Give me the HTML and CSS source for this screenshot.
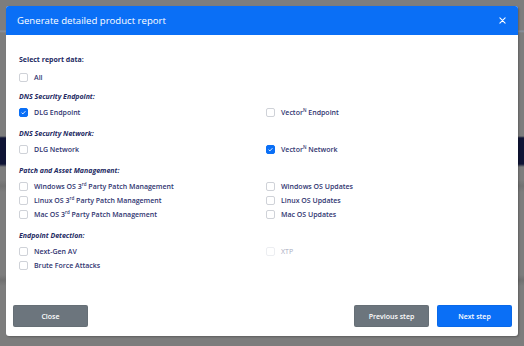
FILE: index.html
```html
<!DOCTYPE html>
<html>
<head>
  <title>Generate detailed product report</title>
  <link rel="stylesheet" href="styles.css">
</head>
<body>
  <div class="modal">
    <div class="modal-header">
      <span class="modal-title">Generate detailed product report</span>
      <button class="close-x" aria-label="Close">
        <svg viewBox="0 0 8 8" width="7" height="7">
          <path d="M1 1L7 7M7 1L1 7" stroke="#fff" stroke-width="1.2" stroke-linecap="round"/>
        </svg>
      </button>
    </div>

    <div class="modal-body">
      <div class="group first">
        <div class="group-title plain">Select report data:</div>
        <div class="rows">
          <label class="check"><span class="box"></span><span>All</span></label>
        </div>
      </div>

      <div class="group">
        <div class="group-title">DNS Security Endpoint:</div>
        <div class="rows">
          <label class="check"><span class="box checked"></span><span>DLG Endpoint</span></label>
          <label class="check"><span class="box"></span><span>Vector<sup>N</sup> Endpoint</span></label>
        </div>
      </div>

      <div class="group">
        <div class="group-title">DNS Security Network:</div>
        <div class="rows">
          <label class="check"><span class="box"></span><span>DLG Network</span></label>
          <label class="check"><span class="box checked"></span><span>Vector<sup>N</sup> Network</span></label>
        </div>
      </div>

      <div class="group">
        <div class="group-title">Patch and Asset Management:</div>
        <div class="rows">
          <label class="check"><span class="box"></span><span>Windows OS 3<sup>rd</sup> Party Patch Management</span></label>
          <label class="check"><span class="box"></span><span>Windows OS Updates</span></label>
          <label class="check"><span class="box"></span><span>Linux OS 3<sup>rd</sup> Party Patch Management</span></label>
          <label class="check"><span class="box"></span><span>Linux OS Updates</span></label>
          <label class="check"><span class="box"></span><span>Mac OS 3<sup>rd</sup> Party Patch Management</span></label>
          <label class="check"><span class="box"></span><span>Mac OS Updates</span></label>
        </div>
      </div>

      <div class="group">
        <div class="group-title">Endpoint Detection:</div>
        <div class="rows">
          <label class="check"><span class="box"></span><span>Next-Gen AV</span></label>
          <label class="check disabled"><span class="box"></span><span>XTP</span></label>
          <label class="check"><span class="box"></span><span>Brute Force Attacks</span></label>
        </div>
      </div>
    </div>

    <div class="modal-footer">
      <button class="btn btn-gray">Close</button>
      <div class="footer-right">
        <button class="btn btn-gray">Previous step</button>
        <button class="btn btn-blue">Next step</button>
      </div>
    </div>
  </div>
</body>
</html>
```

FILE: styles.css
```css
html, body {
  height: 100%;
}
body {
  margin: 0;
  padding: 6px;
  box-sizing: border-box;
  font-family: "Open Sans", "Noto Sans", Arial, sans-serif;
  background:
    linear-gradient(to bottom,
      #7d7d7d 0, #7d7d7d 30px, #8a93a3 31px, #7d7d7d 33px,
      #7d7d7d 136px, #0f1435 138px, #0f1435 164px, #7d7d7d 167px,
      #7d7d7d 180px, #727272 186px, #7d7d7d 192px,
      #7d7d7d 275px, #707070 280px, #7d7d7d 286px, #7d7d7d 100%);
}

.modal {
  width: 512px;
  height: 330px;
  background: #fff;
  border-radius: 3px;
  overflow: hidden;
  display: flex;
  flex-direction: column;
  box-shadow: 1px 1px 2px rgba(0, 0, 0, 0.25);
}

.modal-header {
  height: 29px;
  flex: none;
  background: #0a6ff6;
  display: flex;
  align-items: center;
  padding: 0 11px 0 11px;
}
.modal-title {
  flex: 1;
  color: #fff;
  font-size: 9.6px;
  font-weight: 500;
}
.close-x {
  background: none;
  border: none;
  padding: 0;
  width: 10px;
  height: 10px;
  display: flex;
  align-items: center;
  justify-content: center;
  cursor: pointer;
}

.modal-body {
  flex: 1;
  padding: 18px 13px 0 13px;
}
.group {
  margin-top: 8px;
}
.group.first {
  margin-top: 0;
  margin-bottom: -2px;
}
.group-title {
  height: 14px;
  line-height: 14px;
  margin-bottom: 1px;
  font-size: 7px;
  font-weight: 700;
  font-style: italic;
  color: #232a62;
}
.group-title.plain {
  font-style: normal;
  margin-bottom: 3px;
}
.rows {
  display: grid;
  grid-template-columns: 247px 1fr;
}
.group.first .rows {
  grid-template-columns: 1fr;
}

.check {
  height: 14px;
  display: flex;
  align-items: center;
  font-size: 7px;
  font-weight: 600;
  color: #2f3470;
  white-space: nowrap;
}
.check sup {
  font-size: 4.5px;
  line-height: 0;
  vertical-align: 3px;
}
.box {
  width: 9px;
  height: 9px;
  box-sizing: border-box;
  border: 1px solid #cfd2d8;
  border-radius: 2px;
  margin-right: 6px;
  flex: none;
  background: #fff;
}
.box.checked {
  border-color: #0a6ff6;
  background: #0a6ff6 url("data:image/svg+xml,%3Csvg xmlns='http://www.w3.org/2000/svg' viewBox='0 0 9 9'%3E%3Cpath d='M2.6 4.7L3.9 5.9L6.4 3.2' fill='none' stroke='white' stroke-width='0.9'/%3E%3C/svg%3E") center / 9px 9px no-repeat;
}
.check.disabled {
  color: #a9acc0;
  font-weight: 400;
}
.check.disabled .box {
  border-color: #eceef1;
}

.modal-footer {
  flex: none;
  display: flex;
  justify-content: space-between;
  align-items: center;
  padding: 0 6px 9px 7px;
}
.footer-right {
  display: flex;
  gap: 8px;
}
.btn {
  width: 75px;
  height: 22px;
  border: 1px solid rgba(0, 0, 0, 0.05);
  border-radius: 2px;
  color: #fff;
  font-family: "Open Sans", "Noto Sans", Arial, sans-serif;
  font-size: 7px;
  font-weight: 600;
  cursor: pointer;
}
.btn-gray {
  background: #6c757d;
}
.btn-blue {
  background: #0a6ff6;
}
```
